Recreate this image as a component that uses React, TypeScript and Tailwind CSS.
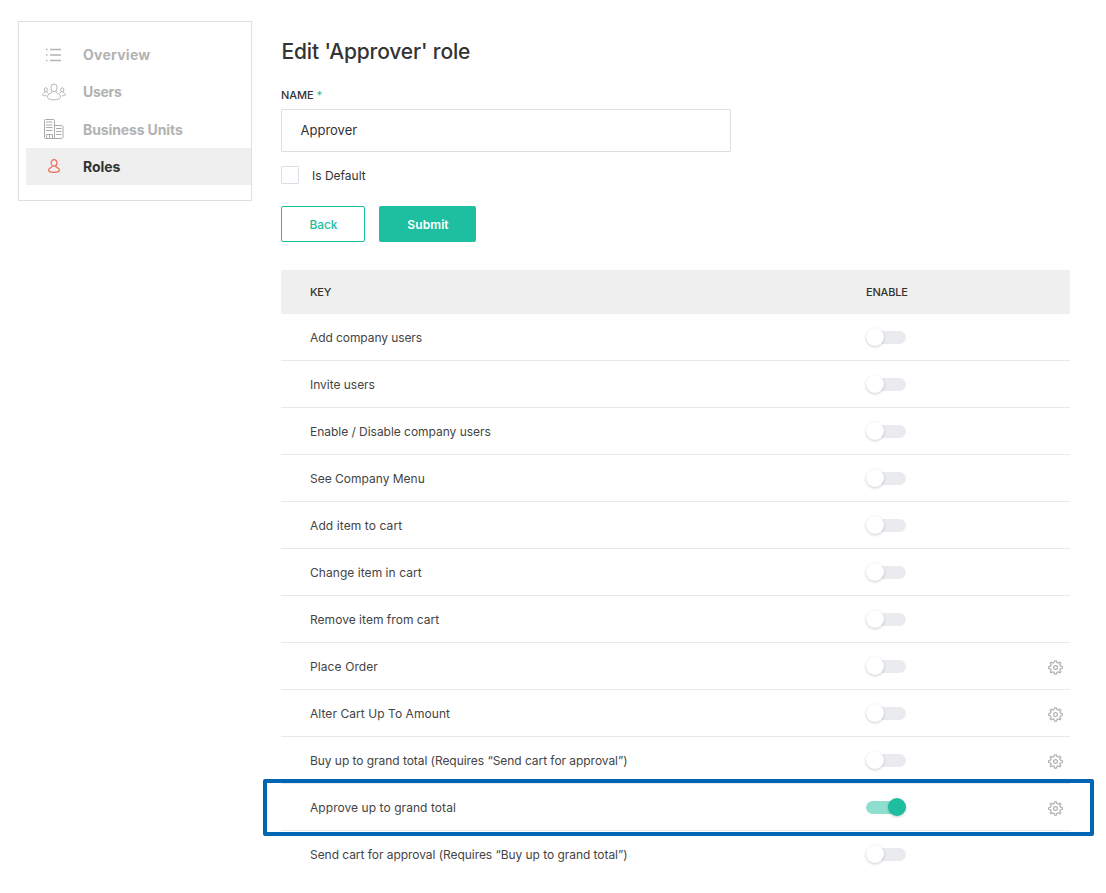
import React from "react";

type Permission = { label: string; tracking: string; enabled?: boolean; configurable?: boolean };

const permissions: Permission[] = [
  { label: "Add company users", tracking: "tracking-[-0.08px]" },
  { label: "Invite users", tracking: "tracking-[-0.03px]" },
  { label: "Enable / Disable company users", tracking: "tracking-[-0.03px]" },
  { label: "See Company Menu", tracking: "tracking-[0px]" },
  { label: "Add item to cart", tracking: "tracking-[0.1px]" },
  { label: "Change item in cart", tracking: "tracking-[0.05px]" },
  { label: "Remove item from cart", tracking: "tracking-[0.03px]" },
  { label: "Place Order", tracking: "tracking-[0.1px]", configurable: true },
  { label: "Alter Cart Up To Amount", tracking: "tracking-[0.06px]", configurable: true },
  { label: "Buy up to grand total (Requires “Send cart for approval”)", tracking: "tracking-[-0.05px]", configurable: true },
  { label: "Approve up to grand total", tracking: "tracking-[0.06px]", enabled: true, configurable: true },
  { label: "Send cart for approval (Requires “Buy up to grand total”)", tracking: "tracking-[-0.05px]" },
];

function ListIcon() {
  return (
    <svg width="15" height="14" viewBox="0 0 15 14" className="mt-px mr-px stroke-[#b4b4b4]" strokeWidth="1.400">
      <path d="M0 1.500h1.500M4 1.500h11M0 7h1.500M4 7h11M0 12.500h1.500M4 12.500h11" />
    </svg>
  );
}

function UsersIcon() {
  return (
    <svg width="24" height="18" viewBox="0 0 24 18" fill="none" className="-ml-px shrink-0 stroke-[#b4b4b4]" strokeWidth="1">
      <ellipse cx="12" cy="4.800" rx="3.100" ry="3.900" />
      <path d="M9.800 8.200c0 1.600-.3 1.900-1.600 2.400-2 .8-2.700 1.700-2.700 3.300 0 1.900 3 2.900 6.500 2.900s6.500-1 6.500-2.900c0-1.600-.7-2.500-2.700-3.300-1.300-.5-1.600-.8-1.600-2.400" />
      <ellipse cx="3.800" cy="6.800" rx="1.600" ry="2" />
      <path d="M2.900 8.600c0 1-.3 1.200-1.100 1.500C.8 10.500.5 11 .5 12c.6.600 1.800.8 3.700.8M4.700 8.600c0 1 .6 1.200 1.600 1.600" />
      <ellipse cx="20.200" cy="6.800" rx="1.600" ry="2" />
      <path d="M21.100 8.600c0 1 .3 1.200 1.100 1.500 1 .4 1.300.9 1.300 1.900-.6.600-1.800.8-3.700.8M19.300 8.600c0 1-.6 1.200-1.600 1.600" />
    </svg>
  );
}

function BuildingsIcon() {
  return (
    <svg width="20" height="20" viewBox="0 0 20 20" fill="none" className="mr-px stroke-[#aaa]" strokeWidth="1">
      <path d="M1.500.5h8q1 0 1 1v18h-9q-1 0-1-1v-17q0-1 1-1zM10.500 6.500h7q1.500 0 1.500 1.500v10q0 1.500-1.500 1.500h-7" />
      <path d="M2 3h6.500M2 6h6.500M2 8.500h6.500M2 11.500h6.500M12 9.500h5.500M12 12.500h5.500M12 15.500h5.500M2.500 19.500v-4h6v4M5.500 15.500v4" />
    </svg>
  );
}

function PersonIcon() {
  return (
    <svg width="12" height="14" viewBox="0 0 12 14" fill="none" className="-mt-px stroke-[#ed6a5a]" strokeWidth="1.200">
      <ellipse cx="6" cy="3.900" rx="2.900" ry="3.200" />
      <path d="M4.400 6.600c.1 1.100-.3 1.400-1.300 1.800C1.300 9.100.6 9.900.6 11.300c0 1.400 2.400 2 5.400 2s5.400-.6 5.400-2c0-1.400-.7-2.200-2.500-2.900-1-.4-1.400-.7-1.300-1.800" />
    </svg>
  );
}

function GearIcon() {
  return (
    <svg width="15" height="15" viewBox="-7.500 -7.500 15 15" fill="none" className="stroke-[#b0b0b0]" strokeWidth="1.200" strokeLinejoin="round">
      <path d="M-1-6.700H1L1.300-5Q2-4.700 2.600-4.300L4.300-5.300 5.300-4.300 4.300-2.600Q4.700-2 5-1.300L6.800-1V1L5 1.300Q4.700 2 4.300 2.600L5.300 4.300 4.300 5.300 2.600 4.300Q2 4.700 1.300 5L1 6.700H-1L-1.300 5Q-2 4.700-2.600 4.300L-4.300 5.300-5.300 4.300-4.300 2.600Q-4.700 2-5 1.300L-6.800 1V-1L-5-1.300Q-4.700-2-4.300-2.600L-5.300-4.300-4.300-5.300-2.600-4.300Q-2-4.700-1.300-5Z" />
      <circle r="1.900" />
    </svg>
  );
}

function Toggle({ on }: { on?: boolean }) {
  return (
    <span role="switch" aria-checked={!!on} className={`flex h-[13px] w-10 items-center rounded-full ${on ? "justify-end bg-[#8edfcf]" : "bg-[#eaebef]"}`}>
      <span className={`size-[18px] shrink-0 rounded-full shadow-[0_1px_3px_rgba(0,0,0,0.2)] ${on ? "bg-[#1ebea0]" : "bg-white"}`} />
    </span>
  );
}

const navItems = [
  { label: "Overview", icon: <ListIcon />, text: "pt-px tracking-[0.25px]" },
  { label: "Users", icon: <UsersIcon />, text: "pb-px tracking-[-0.3px]" },
  { label: "Business Units", icon: <BuildingsIcon />, text: "pt-[2px] tracking-[-0.12px]" },
  { label: "Roles", icon: <PersonIcon />, text: "pt-px tracking-[-0.05px]", active: true },
];

export default function App() {
  return (
    <div className="flex h-[893px] w-[1106px] items-start overflow-hidden bg-white pl-[18px] font-['Inter',sans-serif] text-[#333]">
      <nav className="mt-[21px] flex h-[180px] w-[234px] shrink-0 flex-col border border-[#dddfe3] pt-[14px] pl-[7px]">
        {navItems.map((item) => (
          <a key={item.label} className={`flex items-center ${item.active ? "h-[37px] bg-[#efefef] text-[#333]" : "h-[37.400px] text-[#b2b2b2]"}`}>
            <span className="ml-4 flex w-6 justify-center">{item.icon}</span>
            <span className={`ml-[17px] text-[14px] leading-5 font-bold whitespace-nowrap ${item.text}`}>{item.label}</span>
          </a>
        ))}
      </nav>

      <main className="ml-[29px] w-[789px] shrink-0">
        <h1 className="mt-[37px] h-[30px] pl-[0.5px] text-[21px] leading-[30px] font-medium tracking-[-0.150px] whitespace-nowrap">Edit 'Approver' role</h1>
        <label className="mt-5 block h-4 text-[11px] leading-4 font-medium tracking-[-0.05px]">
          NAME <span className="text-[#1ebea0]">*</span>
        </label>
        <div className="mt-[6px] flex h-[43px] w-[450px] items-center rounded-[1px] border border-[#dddfe3] pt-px pl-[18.500px] text-[13px]">Approver</div>
        <div className="mt-[14px] flex h-[18px] items-center">
          <span className="size-[18px] rounded-[1px] border border-[#dcdfe5]" />
          <span className="ml-[13px] pt-[2px] text-[12px]">Is Default</span>
        </div>
        <div className="mt-[22px] flex gap-[14px]">
          <button className="h-9 w-[84px] rounded-[2px] border border-[#1ebea0] pt-[2px] pl-px text-[12px] font-medium tracking-[-0.1px] text-[#1ebea0]">Back</button>
          <button className="h-9 w-[97px] rounded-[2px] bg-[#1ebea0] pt-[2px] pl-px text-[12px] font-semibold tracking-[0.1px] text-white">Submit</button>
        </div>

        <section className="mt-7">
          <div className="flex h-11 items-center bg-[#efefef] pl-[29px] text-[11px] font-medium tracking-[-0.2px]">
            <span className="w-[556px]">KEY</span>
            <span>ENABLE</span>
          </div>
          {permissions.map((p, i) => (
            <div key={p.label} className={`relative flex h-[47px] items-center pl-[29px] ${i < permissions.length - 1 ? "border-b border-[#e8e9ec]" : "pb-px"}`}>
              <span className={`w-[556px] pt-px text-[12px] leading-5 whitespace-nowrap text-[#444] ${p.tracking}`}>{p.label}</span>
              <Toggle on={p.enabled} />
              {p.configurable && (
                <span className="mt-[3.500px] mr-[7px] ml-auto">
                  <GearIcon />
                </span>
              )}
              {p.enabled && <span className="absolute top-[-5px] right-[-24px] bottom-[-6px] left-[-18px] rounded-[2px] border-4 border-[#0065b3]" />}
            </div>
          ))}
        </section>
      </main>
    </div>
  );
}
